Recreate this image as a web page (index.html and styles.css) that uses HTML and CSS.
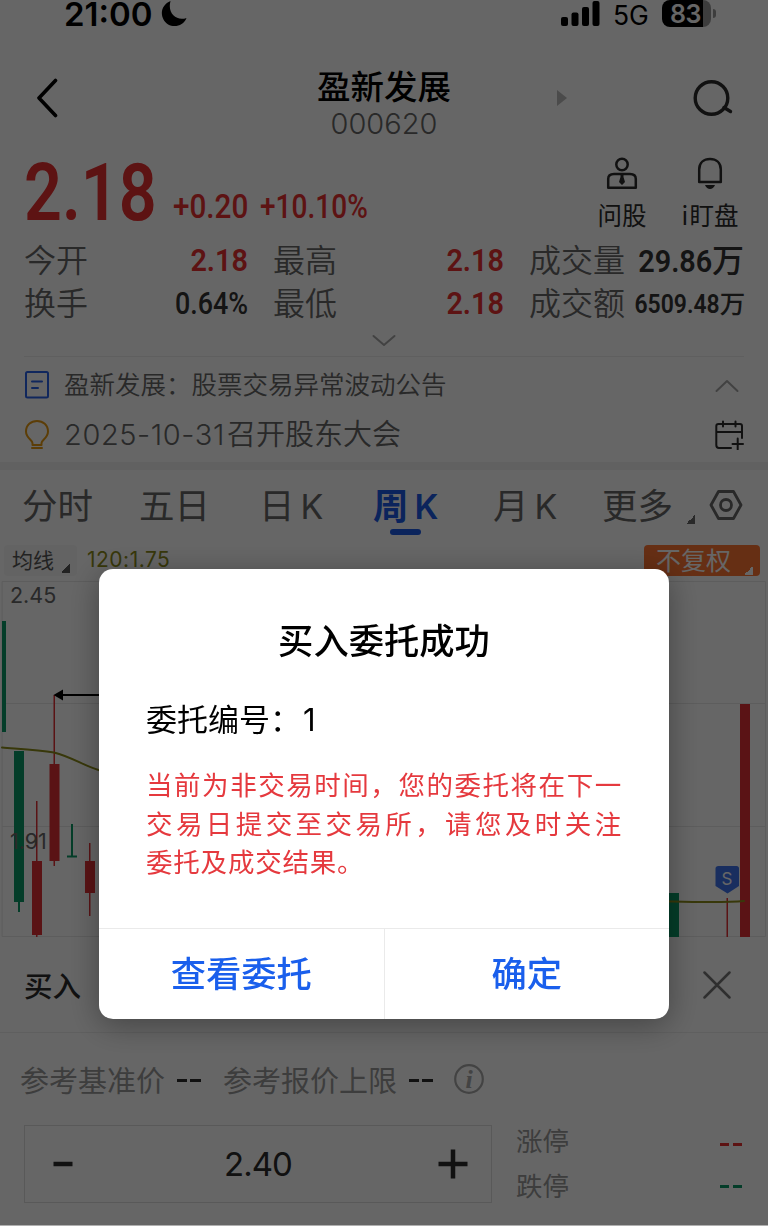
FILE: index.html
```
<!DOCTYPE html>
<html lang="zh-CN">
<head>
  <meta charset="UTF-8">
  <meta name="viewport" content="width=device-width, initial-scale=1.0">
  <title>盈新发展 000620</title>
  <link rel="stylesheet" href="styles.css">
</head>
<body>

<div class="page">
  <!-- 状态栏 -->
  <div class="status-bar">
    <span class="time">21:00</span>
    <svg class="moon" width="28" height="28" viewBox="0 0 28 28"><path d="M10.500 1C3 4 -.5 12 3.500 19.500C8 28.500 22.500 28.500 26.500 18C17 21.500 7 14 10.500 1Z"/></svg>
    <svg class="signal" width="40" height="26" viewBox="0 0 40 26">
      <rect x="0" y="16" width="7" height="9" rx="2"/>
      <rect x="10.500" y="11.500" width="7" height="13.500" rx="2"/>
      <rect x="21" y="6" width="7" height="19" rx="2"/>
      <rect x="31.500" y="0" width="7" height="25" rx="2"/>
    </svg>
    <span class="network">5G</span>
    <div class="battery"><span>83</span></div>
    <i class="battery-tip"></i>
  </div>

  <!-- 标题 -->
  <div class="header">
    <svg class="back" width="24" height="40" viewBox="0 0 24 40"><path d="M21.500 2.500L5 20L21.500 37.500"/></svg>
    <div class="stock">
      <h1>盈新发展</h1>
      <p>000620</p>
    </div>
    <i class="next"></i>
    <svg class="search" width="42" height="40" viewBox="0 0 42 40"><circle cx="19.500" cy="20" r="16.300"/><path d="M32 29.500L38.500 33.500"/></svg>
  </div>

  <!-- 行情 -->
  <div class="quote">
    <div class="price-row">
      <span class="price">2.18</span>
      <span class="change">+0.20</span>
      <span class="change percent">+10.10%</span>
      <div class="tool ask">
        <svg width="32" height="34" viewBox="0 0 32 34">
          <circle cx="16" cy="8.500" r="5.700"/>
          <path d="M2.200 31.800V23C2.200 19 4.500 18 8 18H24C27.500 18 29.800 19 29.800 23V31.800Z"/>
          <path class="solid" d="M14.500 18H17.500V21L19 26L16 29L13 26L14.500 21Z"/>
        </svg>
        <span>问股</span>
      </div>
      <div class="tool watch">
        <svg width="32" height="34" viewBox="0 0 32 34">
          <path d="M5.200 26V13.500C5.200 6.500 10 3 16 3S26.800 6.500 26.800 13.500V26Z"/>
          <path class="solid" d="M11 29H21C20 31.500 18 33 16 33S12 31.500 11 29Z"/>
        </svg>
        <span>i 盯盘</span>
      </div>
    </div>
    <div class="quote-grid">
      <div class="cell"><label>今开</label><b class="num up">2.18</b></div>
      <div class="cell"><label>最高</label><b class="num up">2.18</b></div>
      <div class="cell"><label>成交量</label><span><b class="num">29.86</b><b class="unit">万</b></span></div>
      <div class="cell"><label>换手</label><b class="num rate">0.64%</b></div>
      <div class="cell"><label>最低</label><b class="num up">2.18</b></div>
      <div class="cell small"><label>成交额</label><span><b class="num">6509.48</b><b class="unit">万</b></span></div>
    </div>
    <svg class="expand" width="24" height="14" viewBox="0 0 24 14"><path d="M1.500 2L12 11L22.500 2"/></svg>
  </div>

  <!-- 公告 -->
  <div class="news">
    <div class="news-row notice">
      <svg class="doc" width="26" height="30" viewBox="0 0 26 30"><rect x="2" y="2" width="22" height="25.500" rx="1.500"/><path d="M8 11.500H18M8 18H14"/></svg>
      <span>盈新发展：股票交易异常波动公告</span>
      <svg class="fold" width="24" height="14" viewBox="0 0 24 14"><path d="M1.500 12L12 2L22.500 12"/></svg>
    </div>
    <div class="news-row meeting">
      <svg class="bulb" width="26" height="32" viewBox="0 0 26 32"><path d="M8.500 26V24C8.500 21 2 19 2 12.500C2 6 7 2 13 2S24 6 24 12.500C24 19 17.500 21 17.500 24V26ZM8 29H18"/></svg>
      <span><em>2025-10-31</em>召开股东大会</span>
      <svg class="calendar" width="30" height="30" viewBox="0 0 30 30"><path d="M17 28H5C3 28 2.300 27 2.300 25V6C2.300 4.500 3 4 4.500 4H26C27.500 4 28 4.500 28 6V18M2.300 12H28M9 1.500V6.500M21.500 1.500V6.500M18.500 24H29M23.700 18.500V29.500"/></svg>
    </div>
  </div>

  <!-- 周期切换 -->
  <div class="tabs">
    <span>分时</span>
    <span>五日</span>
    <span class="day">日<em>K</em></span>
    <span class="active">周<em>K</em></span>
    <span class="month">月<em>K</em></span>
    <span class="more">更多</span>
    <svg class="settings" width="34" height="32" viewBox="0 0 34 32"><path d="M9.500 2.500H24.500L32 16L24.500 29.500H9.500L2 16Z"/><circle cx="17" cy="16" r="5.500"/></svg>
  </div>

  <div class="chart-bar">
    <span class="ma">均线</span>
    <span class="ma-value">120:1.75</span>
    <span class="adjust">不复权</span>
  </div>

  <!-- 周K图，坐标与页面一致 -->
  <svg class="chart" width="768" height="357" viewBox="0 580 768 357">
    <path class="grid" d="M2.500 581.500H765.500V936.500H2.500ZM2.500 703.500H765.500M2.500 826.500H765.500"/>
    <text class="axis" x="10" y="603">2.45</text>
    <g class="fall">
      <rect x="2" y="621" width="4" height="111"/>
      <rect x="14" y="751" width="10" height="151"/>
      <rect x="18" y="902" width="2" height="10"/>
      <rect x="71" y="824" width="2" height="33"/>
      <rect x="67" y="855.500" width="10" height="2"/>
      <rect x="668" y="893" width="11" height="44"/>
    </g>
    <g class="rise">
      <rect x="36" y="801" width="1.500" height="60"/>
      <rect x="32" y="861" width="10" height="74"/>
      <rect x="36" y="935" width="1.500" height="2"/>
      <rect x="53.500" y="695" width="1.500" height="70"/>
      <rect x="49.500" y="764" width="10" height="97"/>
      <rect x="53.500" y="861" width="1.500" height="5"/>
      <rect x="89" y="843" width="1.500" height="73"/>
      <rect x="85" y="861" width="10" height="32"/>
      <rect x="726.500" y="898" width="1.500" height="39"/>
      <rect x="740" y="704" width="10" height="233"/>
    </g>
    <path class="ma-line" d="M2 747.500C20 749 38 750 54 752.500C72 757 84 766 100 770.500"/>
    <path class="ma-line" d="M668 901.500C690 902 725 903 744 901"/>
    <text class="axis" x="10" y="848.500">1.91</text>
    <path class="arrow" d="M62 695H100"/>
    <path d="M53.500 695L63 689.500V700.500Z"/>
    <path class="mark" d="M718.500 866H736.500Q739 866 739 868.500V886L727.500 893.500L715.500 886V868.500Q715.500 866 718.500 866Z"/>
    <text class="mark-text" x="727" y="884.500">S</text>
  </svg>

  <!-- 买入面板 -->
  <div class="trade">
    <div class="trade-title">
      <span>买入</span>
      <svg width="28" height="28" viewBox="0 0 28 28"><path d="M1.500 1.500L26.500 26.500M26.500 1.500L1.500 26.500"/></svg>
    </div>
    <div class="reference">
      <span>参考基准价</span><i class="dash"></i>
      <span class="limit">参考报价上限</span><i class="dash"></i>
      <svg width="32" height="32" viewBox="0 0 32 32"><circle cx="16" cy="16" r="13.800"/><text x="16" y="25">i</text></svg>
    </div>
    <div class="order">
      <div class="stepper">
        <svg width="30" height="30" viewBox="0 0 30 30"><path d="M5.500 15H24.500"/></svg>
        <span>2.40</span>
        <svg width="30" height="30" viewBox="0 0 30 30"><path d="M.5 15H29.500M15 .5V29.500"/></svg>
      </div>
      <div class="limits">
        <div class="up"><span>涨停</span><i class="dash"></i></div>
        <div class="down"><span>跌停</span><i class="dash"></i></div>
      </div>
    </div>
  </div>
</div>

<!-- 委托结果弹窗 -->
<div class="mask">
  <div class="dialog">
    <h2>买入委托成功</h2>
    <p class="order-no">委托编号：<span>1</span></p>
    <div class="tip">
      <p class="full">当前为非交易时间，您的委托将在下一</p>
      <p class="full">交易日提交至交易所，请您及时关注</p>
      <p>委托及成交结果。</p>
    </div>
    <div class="buttons">
      <button type="button">查看委托</button>
      <button type="button">确定</button>
    </div>
  </div>
</div>

</body>
</html>
```
FILE: styles.css
```
* {
  box-sizing: border-box;
}
body {
  margin: 0;
  height: 1226px;
  overflow: hidden;
  background: #b0b0b0;
  font-family: Inter, "Noto Sans CJK SC", sans-serif;
  color: #333;
}
h1, h2, p {
  margin: 0;
}
i, em {
  font-style: normal;
}
svg {
  display: block;
  flex: none;
  fill: none;
  stroke-linecap: round;
  stroke-linejoin: round;
}
.page {
  width: 768px;
  height: 1225px;
  overflow: hidden;
  background: #fff;
}

/* 状态栏 */
.status-bar {
  display: flex;
  height: 30px;
  padding-left: 64px;
  color: #000;
}
.time {
  width: 96px;
  font-size: 33px;
  font-weight: 600;
  line-height: 29px;
}
.moon {
  fill: #000;
}
.signal {
  margin: 1px 0 0 373px;
  fill: #000;
}
.network {
  width: 49px;
  margin-left: 12px;
  font-size: 26.5px;
  line-height: 30px;
}
.battery {
  width: 49px;
  height: 27px;
  border-radius: 8px;
  background: linear-gradient(90deg, #000 41px, #999 41px);
  color: #fff;
  font-size: 25px;
  font-weight: 600;
  line-height: 28px;
  padding-left: 8px;
  letter-spacing: -0.5px;
}
.battery-tip {
  width: 3px;
  height: 9px;
  margin: 9px 0 0 2px;
  border-radius: 0 4px 4px 0;
  background: #999;
}

/* 标题 */
.header {
  display: flex;
  height: 120px;
  padding-left: 34px;
}
.back {
  margin-top: 48px;
  stroke: #000;
  stroke-width: 3.6;
}
.stock {
  width: 200px;
  margin-left: 226px;
  padding-top: 35px;
  text-align: center;
}
h1 {
  font-size: 33.5px;
  font-weight: 500;
  line-height: 44px;
  color: #000;
}
.stock p {
  font-size: 29px;
  font-weight: 300;
  line-height: 29px;
  color: #666;
}
.next {
  margin: 60px 0 0 73px;
  height: 16px;
  border: solid transparent;
  border-width: 8px 0 8px 10px;
  border-left-color: #bbb;
}
.search {
  margin: 48px 0 0 125px;
  stroke: #2b2b2b;
  stroke-width: 3.4;
}

/* 行情 */
.quote {
  height: 207px;
  margin: 0 24px;
  border-bottom: 1px solid #eee;
}
.price-row {
  display: flex;
  height: 87px;
  font-family: Roboto, sans-serif;
  color: #e93030;
}
.price {
  width: 149px;
  font-size: 80px;
  font-weight: 600;
  line-height: 86px;
  transform: scaleX(0.83);
  transform-origin: left;
  white-space: nowrap;
}
.change {
  width: 87px;
  padding-top: 37px;
  font-size: 33px;
  font-weight: 500;
  line-height: 40px;
  transform: scaleX(0.9);
  transform-origin: left;
}
.percent {
  transform: scaleX(0.85);
}
.tool {
  display: flex;
  flex-direction: column;
  align-items: center;
  width: 64px;
  padding-top: 6px;
  font: 24.5px/34px "Noto Sans CJK SC", sans-serif;
  color: #2b2b2b;
  white-space: nowrap;
}
.tool span {
  margin-top: 8px;
}
.ask {
  margin-left: 243px;
}
.watch {
  margin-left: 24px;
  word-spacing: -4px;
}
.tool svg {
  stroke: #2b2b2b;
  stroke-width: 2.5;
}
.tool .solid {
  fill: #2b2b2b;
  stroke: none;
}
.quote-grid {
  display: grid;
  grid-template-columns: 224px 231px 215px;
  grid-template-rows: 43px 43px;
  column-gap: 25px;
}
.cell {
  display: flex;
  justify-content: space-between;
  font-size: 32px;
  line-height: 43px;
  white-space: nowrap;
}
.cell label {
  font-family: "Noto Sans CJK SC", sans-serif;
  font-weight: 350;
  color: #666;
}
.num {
  display: inline-block;
  font-family: Roboto, sans-serif;
  font-weight: 600;
  transform: scaleX(0.9);
  transform-origin: right;
}
.cell > .num {
  padding-top: 2px;
}
.cell > .rate {
  font-weight: 500;
  transform: scaleX(0.84);
}
.num.up {
  color: #e93030;
}
.unit {
  font-family: "Noto Sans CJK SC", sans-serif;
  font-weight: 500;
}
.small span {
  margin-right: 2px;
  font-size: 25.5px;
}
.expand, .fold {
  stroke: #a6a6a6;
  stroke-width: 2;
}
.expand {
  margin: 11px auto 0;
}

/* 公告 */
.news {
  height: 113px;
  border-bottom: 8px solid #f2f2f2;
  padding: 1px 24px 0;
}
.news-row {
  display: flex;
  align-items: center;
  color: #666;
}
.notice {
  height: 54px;
  font-size: 25.5px;
}
.meeting {
  height: 46px;
  font-size: 29px;
}
.news-row span {
  margin-left: 14px;
  line-height: 46px;
  font-weight: 350;
}
.news-row em {
  margin-right: 2px;
  letter-spacing: 0.6px;
}
.doc {
  stroke: #2a62e8;
  stroke-width: 2;
}
.bulb {
  stroke: #e69a12;
  stroke-width: 2;
}
.fold {
  margin: 2px 5px 0 auto;
}
.calendar {
  margin-left: auto;
  stroke: #2b2b2b;
  stroke-width: 2;
}

/* 周期切换 */
.tabs {
  display: flex;
  height: 75px;
  padding-left: 22px;
  color: #666;
  font-size: 35.5px;
  line-height: 73px;
}
.tabs span {
  width: 117px;
  white-space: nowrap;
}
.tabs em {
  margin-left: 6px;
  font-size: 34px;
}
.tabs .day {
  padding-left: 3px;
}
.tabs .month {
  width: 112px;
  padding-left: 3px;
}
.tabs .active {
  position: relative;
  color: #1d5be6;
  font-weight: 600;
}
.tabs .active::after {
  content: "";
  position: absolute;
  left: 17px;
  top: 59px;
  width: 31px;
  height: 6px;
  border-radius: 3px;
  background: #1d5be6;
}
.more::after, .ma::after, .adjust::after {
  content: "";
  display: inline-block;
  width: 9px;
  height: 9px;
  margin-left: 13px;
  vertical-align: -5px;
  background: linear-gradient(135deg, transparent 50%, currentColor 50%);
}
.tabs .more {
  width: 122px;
}
.settings {
  margin: 19px 0 0 -15px;
  stroke: #666;
  stroke-width: 2.8;
}

/* 图表顶栏 */
.chart-bar {
  display: flex;
  height: 35px;
  padding: 0 8px 0 4px;
  font-size: 21px;
  line-height: 31px;
}
.ma {
  width: 73px;
  height: 31px;
  padding-left: 8px;
  border-radius: 4px;
  background: #f7f7f7;
  color: #555;
}
.ma::after {
  margin-left: 7px;
}
.ma-value {
  margin-left: 10px;
  color: #8c8c1a;
  line-height: 30px;
  letter-spacing: 0.5px;
}
.adjust {
  width: 116px;
  height: 31px;
  margin-left: auto;
  padding-left: 12px;
  border-radius: 4px;
  background: #ff7533;
  color: #fff;
  font-size: 25px;
  line-height: 33px;
  white-space: nowrap;
}
.grid {
  stroke: #e8e8e8;
}
.axis {
  fill: #666;
  font-size: 21.5px;
}
.fall {
  fill: #0b9a66;
}
.rise {
  fill: #e03035;
}
.ma-line {
  stroke: #8c8c1a;
  stroke-width: 2;
}
.chart path:not([class]) {
  fill: #000;
}
.arrow {
  stroke: #000;
  stroke-width: 2;
}
.mark {
  fill: #3f74ee;
}
.mark-text {
  fill: #fff;
  font-size: 17px;
  text-anchor: middle;
}

/* 买入面板 */
.trade-title {
  display: flex;
  align-items: center;
  justify-content: space-between;
  height: 96px;
  padding: 0 37px 0 24px;
  border-bottom: 1px solid #eee;
  font-size: 28.5px;
  font-weight: 500;
  color: #2b2b2b;
}
.trade-title svg {
  stroke: #777;
  stroke-width: 2.5;
}
.reference {
  display: flex;
  align-items: center;
  height: 92px;
  padding-left: 20px;
  color: #999;
  font-size: 29px;
}
.dash {
  width: 24px;
  height: 3px;
  margin: 3px 0 0 12px;
  background: linear-gradient(90deg, #2b2b2b 10px, transparent 10px 13px, #2b2b2b 13px);
}
.limit {
  margin-left: 22px;
}
.reference svg {
  margin-left: 20px;
  stroke: #a8a8a8;
  stroke-width: 2.2;
}
.reference text {
  fill: #a8a8a8;
  stroke: none;
  font: italic bold 26px "Liberation Serif", serif;
  text-anchor: middle;
}
.order {
  display: flex;
  padding: 0 25px 0 24px;
}
.stepper {
  display: flex;
  align-items: center;
  justify-content: space-between;
  width: 468px;
  height: 78px;
  padding: 0 23px;
  border: 1.5px solid #dedede;
  font-size: 33px;
  letter-spacing: -1px;
  color: #2b2b2b;
}
.stepper svg {
  stroke: #2b2b2b;
  stroke-width: 4.5;
  stroke-linecap: butt;
}
.limits {
  flex: 1;
  margin-left: 24px;
  color: #999;
  font-size: 26.5px;
  line-height: 45px;
}
.limits div {
  display: flex;
  align-items: center;
  justify-content: space-between;
  height: 45px;
  margin-top: -6px;
}
.limits .down {
  margin-top: 0;
}
.limits .dash {
  width: 22px;
  margin-right: 1px;
  margin-top: 5px;
}
.limits .down .dash {
  margin-top: 0;
}
.limits .up .dash {
  background: linear-gradient(90deg, #e93030 9px, transparent 9px 13px, #e93030 13px);
}
.limits .down .dash {
  background: linear-gradient(90deg, #0b9a66 9px, transparent 9px 13px, #0b9a66 13px);
}

/* 弹窗 */
.mask {
  position: fixed;
  left: 0;
  top: 0;
  width: 768px;
  height: 1225px;
  padding: 569px 99px 0;
  background: rgba(0, 0, 0, 0.6);
}
.dialog {
  height: 450px;
  border-radius: 14px;
  background: #fff;
  box-shadow: 0 6px 32px rgba(0, 0, 0, 0.35);
  overflow: hidden;
  color: #000;
}
h2 {
  padding-top: 47px;
  font-size: 35.3px;
  font-weight: 500;
  line-height: 52px;
  text-align: center;
}
.order-no {
  padding: 31px 0 0 47px;
  font-size: 31px;
  line-height: 42px;
}
.order-no span {
  margin-left: 2px;
}
.tip {
  width: 475px;
  height: 158px;
  margin: 25px 0 0 47px;
  color: #e5393e;
  font-size: 26.5px;
  line-height: 38.5px;
  letter-spacing: 0.8px;
  white-space: nowrap;
}
.full {
  text-align-last: justify;
  margin-right: -1px;
}
.buttons {
  display: flex;
  height: 91px;
  margin-top: 4px;
  border-top: 1.5px solid #eaeaea;
}
.buttons button {
  flex: 1;
  padding: 0 0 4px;
  border: 0;
  background: none;
  color: #1a5fec;
  font: 500 35.3px/86px "Noto Sans CJK SC", sans-serif;
}
.buttons button:first-child {
  border-right: 1px solid #eaeaea;
}
```
